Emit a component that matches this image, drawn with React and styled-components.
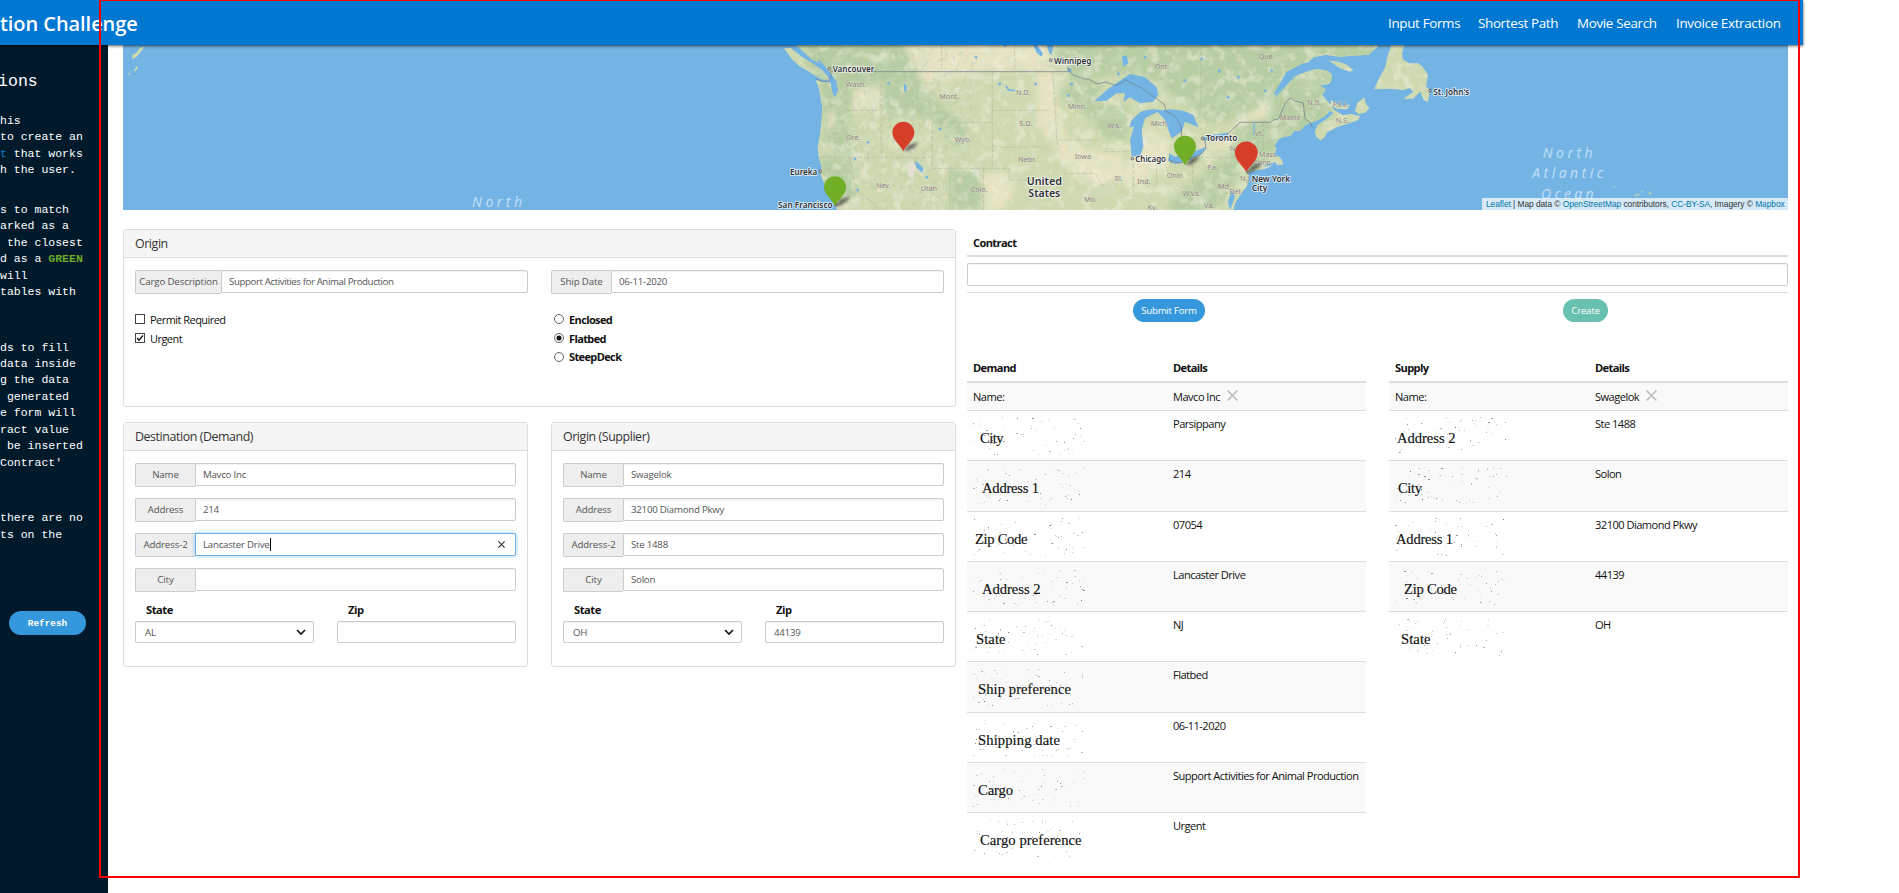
import React from "react";
import styled, { createGlobalStyle, css } from "styled-components";

const GlobalStyle = createGlobalStyle`
  * { box-sizing: border-box; }
  body { margin: 0; background: #fff; overflow: hidden; }
  body, input, button { font-family: "Open Sans", "Noto Sans", sans-serif; }
`;

const Page = styled.div`
  position: relative;
  width: 1899px;
  height: 893px;
  overflow: hidden;
  color: #111;
  font-size: 11.1px;
  letter-spacing: -0.53px;
`;
const Header = styled.header`
  position: relative;
  z-index: 2;
  display: flex;
  align-items: center;
  justify-content: space-between;
  width: 1803px;
  height: 45px;
  padding-right: 23px;
  background: #0077d1;
  box-shadow: 0 1px 3px rgba(0, 0, 0, 0.65);
  color: #fff;
`;
const Brand = styled.h1`
  margin: 0;
  font-size: 20px;
  line-height: 45px;
  font-weight: 600;
  letter-spacing: -0.06px;
  padding-top: 1px;
`;
const Nav = styled.nav`
  display: flex;
  gap: 18px;
  padding-top: 1px;
`;
const NavLink = styled.a`
  width: ${(p) => p.$w}px;
  font-size: 13.4px;
  letter-spacing: -0.33px;
  white-space: nowrap;
`;
const Body = styled.div`
  display: flex;
  height: 848px;
`;
const Sidebar = styled.aside`
  width: 108px;
  flex: none;
  padding-top: 26px;
  background: #001a2c;
  color: #fff;
  font-family: "Liberation Mono", monospace;
  letter-spacing: 0;
`;
const SideTitle = styled.h2`
  margin: 0 0 20px -2px;
  font-size: 16.6px;
  line-height: 22px;
  font-weight: 400;
`;
const SideText = styled.p`
  margin: 0 0 ${(p) => p.$gap}px;
  font-size: 11.5px;
  line-height: 16.45px;
  white-space: pre;
`;
const Blue = styled.span`
  color: #1279d2;
`;
const Green = styled.b`
  color: #6cab27;
`;
const Pill = styled.button`
  display: block;
  width: ${(p) => p.$w}px;
  height: ${(p) => p.$h || 23}px;
  padding: 0;
  border: 0;
  border-radius: 12px;
  background: ${(p) => p.$bg || "#3598dc"};
  color: #fff;
  font-size: 9.7px;
  font-weight: 500;
  letter-spacing: -0.25px;
  ${(p) =>
    p.$mono &&
    css`
      margin-left: 9px;
      font-family: "Liberation Mono", monospace;
      font-size: 9.4px;
      font-weight: 700;
      letter-spacing: 0;
    `}
`;
const Main = styled.main`
  width: 1680px;
  padding-left: 15px;
`;
const MapBox = styled.div`
  position: relative;
  height: 165px;
  overflow: hidden;
  background: #73b4e5;
  svg { display: block; }
`;
const Attribution = styled.div`
  position: absolute;
  right: 0;
  bottom: 0;
  width: 306px;
  height: 12px;
  padding-left: 4px;
  background: rgba(255, 255, 255, 0.7);
  color: #333;
  font: 8.4px/13px "Liberation Sans", sans-serif;
  letter-spacing: -0.05px;
  white-space: nowrap;
  a { color: #0078a8; }
`;
const Columns = styled.div`
  display: flex;
  gap: 11px;
  padding-top: 19px;
`;
const Forms = styled.div`
  width: 833px;
  flex: none;
`;
const Pair = styled.div`
  display: grid;
  grid-template-columns: 405px 405px;
  gap: 23px;
`;
const Panel = styled.section`
  height: ${(p) => p.$h}px;
  margin-bottom: 15px;
  border: 1px solid #ddd;
  border-radius: 3px;
  background: #fff;
`;
const PanelHead = styled.h3`
  height: 28px;
  margin: 0;
  padding: 0 0 0 11px;
  border-bottom: 1px solid #ddd;
  background: #f5f5f5;
  color: #333;
  font-size: 12.4px;
  font-weight: 400;
  letter-spacing: -0.42px;
  line-height: 28px;
`;
const OriginGrid = styled.div`
  display: grid;
  grid-template-columns: 393px 393px;
  column-gap: 23px;
  padding: 12px 0 0 11px;
`;
const PanelBody = styled.div`
  padding: 12px 11px 0;
`;
const Field = styled.div`
  display: flex;
  height: 24px;
  margin-bottom: ${(p) => p.$gap ?? 11}px;
  width: ${(p) => (p.$w ? p.$w + "px" : "auto")};
`;
const Addon = styled.label`
  width: ${(p) => p.$w}px;
  border: 1px solid #ccc;
  border-right: 0;
  border-radius: 2px 0 0 2px;
  background: #eee;
  color: #555;
  font-size: 9.7px;
  line-height: 22px;
  letter-spacing: -0.13px;
  text-align: center;
  white-space: nowrap;
`;
const Value = styled.div`
  position: relative;
  display: flex;
  align-items: center;
  flex: 1;
  height: ${(p) => p.$h || 23}px;
  padding: 0 10px 0 ${(p) => p.$pl ?? 7}px;
  border: 1px solid ${(p) => (p.$focus ? "#66afe9" : "#ccc")};
  border-radius: ${(p) => (p.$alone ? "2px" : "0 2px 2px 0")};
  box-shadow: ${(p) =>
    p.$focus ? "0 0 5px rgba(102,175,233,.6)" : "inset 0 1px 1px rgba(0,0,0,.06)"};
  background: #fff;
  color: #555;
  font-size: 9.7px;
  letter-spacing: ${(p) => p.$ls ?? -0.24}px;
  svg { margin-left: auto; }
`;
const Caret = styled.span`
  width: 1px;
  height: 13px;
  background: #111;
`;
const Checks = styled.div`
  display: flex;
  flex-direction: column;
  padding: ${(p) => p.$pad};
`;
const Check = styled.label`
  display: flex;
  align-items: center;
  gap: 5px;
  height: 18.8px;
  font-weight: ${(p) => (p.$bold ? 700 : 400)};
  font-size: 11px;
  letter-spacing: ${(p) => (p.$bold ? -0.62 : -0.54)}px;
`;
const Half = styled.div`
  display: grid;
  grid-template-columns: 179px 179px;
  column-gap: 23px;
  margin-top: -4px;
  svg { margin-right: -3px; }
`;
const HalfLabel = styled.div`
  height: 22px;
  padding-left: ${(p) => p.$pl}px;
  font-size: 11.2px;
  font-weight: 700;
  letter-spacing: -0.5px;
  line-height: 22px;
`;
const Right = styled.div`
  width: 821px;
`;
const ContractHead = styled.div`
  height: 28px;
  padding-left: 6px;
  border-bottom: 2px solid #ddd;
  font-weight: 700;
  letter-spacing: -0.62px;
  line-height: 28px;
`;
const ContractRow = styled.div`
  height: 36px;
  padding-top: 6px;
  border-bottom: 1px solid #ddd;
`;
const Buttons = styled.div`
  display: flex;
  height: 60px;
  padding: 6px 0 0 166px;
  gap: 358px;
`;
const Tables = styled.div`
  display: flex;
  gap: 23px;
`;
const Table = styled.div`
  width: 399px;
`;
const Row = styled.div`
  display: grid;
  grid-template-columns: ${(p) => p.$c}px 1fr;
  height: 50.25px;
  padding-left: 6px;
  border-top: 1px solid #ddd;
  background: ${(p) => (p.$odd ? "#f9f9f9" : "#fff")};
  line-height: 17px;
  white-space: nowrap;
`;
const Cell = styled.div`
  padding-top: 4px;
`;
const HeadRow = styled(Row)`
  height: 30px;
  border-top: 0;
  border-bottom: 2px solid #ddd;
  font-weight: 700;
  letter-spacing: -0.62px;
  line-height: 29px;
  ${Cell} { padding: 0; }
`;
const NameRow = styled(Row)`
  height: 27px;
  border: 0;
  line-height: 28px;
  ${Cell} { padding: 0; }
  svg { margin-left: 7px; vertical-align: 0; }
`;
const Frame = styled.div`
  position: absolute;
  z-index: 3;
  left: 99px;
  top: -1px;
  width: 1701px;
  height: 879px;
  border: 2px solid #f80000;
  pointer-events: none;
`;

const Cross = ({ size = 11, color = "#bbb", w = 1.4 }) => (
  <svg width={size} height={size} viewBox="0 0 10 10">
    <path d="M.5.5l9 9M9.5.5l-9 9" stroke={color} strokeWidth={w} fill="none" />
  </svg>
);
const Chevron = () => (
  <svg width="10" height="7" viewBox="0 0 10 7">
    <path d="M1 1l4 4 4-4" stroke="#111" strokeWidth="1.6" fill="none" />
  </svg>
);
const Box = ({ on }) => (
  <svg width="10" height="10" viewBox="0 0 10 10">
    <rect x=".5" y=".5" width="9" height="9" fill="#fff" stroke="#444" />
    {on && <path d="M2 5l2 2.2L8 2.5" stroke="#111" strokeWidth="1.3" fill="none" />}
  </svg>
);
const Dot = ({ on }) => (
  <svg width="10" height="10" viewBox="0 0 10 10">
    <circle cx="5" cy="5" r="4.5" fill="#fff" stroke="#555" strokeWidth=".9" />
    {on && <circle cx="5" cy="5" r="2.5" fill="#111" />}
  </svg>
);

function specks(seed) {
  let s = seed * 7919 + 13;
  const rnd = () => {
    s = (s * 16807) % 2147483647;
    return s / 2147483647;
  };
  rnd();
  return Array.from({ length: 58 }, () => ({
    x: Math.floor(rnd() * 112),
    y: Math.floor(rnd() * 38),
    o: 0.1 + rnd() * rnd() * 0.5,
    w: rnd() > 0.85 ? 2 : 1,
  }));
}
const Captcha = ({ text, x, w, seed }) => (
  <svg width="114" height="46" viewBox="0 0 114 46">
    {specks(seed).map((p, i) => (
      <rect key={i} x={p.x} y={p.y + 6} width={p.w} height="1" fill="#000" opacity={p.o} />
    ))}
    <text x={x} y="31.5" textLength={w} fontFamily="Liberation Serif, serif" fontSize="14.6" fill="#111" stroke="#111" strokeWidth=".15" letterSpacing="0">
      {text}
    </text>
  </svg>
);

const demand = [
  ["City", "Parsippany", 7, 23.5],
  ["Address 1", "214", 9, 57],
  ["Zip Code", "07054", 2, 52.5],
  ["Address 2", "Lancaster Drive", 9, 58.5],
  ["State", "NJ", 3, 29.5],
  ["Ship preference", "Flatbed", 5, 93],
  ["Shipping date", "06-11-2020", 5, 82],
  ["Cargo", "Support Activities for Animal Production", 5, 35],
  ["Cargo preference", "Urgent", 7, 101.5],
];
const supply = [
  ["Address 2", "Ste 1488", 2, 58.5],
  ["City", "Solon", 3, 24],
  ["Address 1", "32100 Diamond Pkwy", 1, 57],
  ["Zip Code", "44139", 9, 53],
  ["State", "OH", 6, 29.5],
];
const DetailTable = ({ title, name, rows, c, seed }) => (
  <Table>
    <HeadRow $c={c}>
      <Cell>{title}</Cell>
      <Cell>Details</Cell>
    </HeadRow>
    <NameRow $c={c} $odd>
      <Cell>Name:</Cell>
      <Cell>
        {name}
        <Cross />
      </Cell>
    </NameRow>
    {rows.map(([label, value, x, w], i) => (
      <Row key={label} $c={c} $odd={i % 2 === 1}>
        <Captcha text={label} x={x} w={w} seed={seed + i} />
        <Cell>{value}</Cell>
      </Row>
    ))}
  </Table>
);

const LAND =
  "M75 10L100 35 125 58 150 70 168 82 178 95 192 112 200 130 197 160 190 168 184 145 182 128 165 126 138 120 148 150 152 175 157 200 154 250 150 285 143 320 146 350 155 382 152 405 163 430 166 455 184 478 192 492 205 515L1388 515 1396 490 1412 462 1430 440 1438 415 1434 398 1450 392 1486 386 1505 378 1480 380 1490 372 1515 366 1522 374 1539 374 1536 360 1526 348 1518 352 1514 340 1520 325 1512 318 1526 298 1540 290 1562 288 1572 272 1590 272 1600 262 1612 252 1618 250 1640 242 1665 228 1680 212 1690 220 1668 238 1642 256 1634 276 1640 292 1652 301 1664 292 1672 276 1700 262 1730 252 1765 240 1770 228 1742 222 1718 226 1690 208 1684 196 1672 184 1656 164 1668 150 1650 136 1676 132 1684 122 1686 104 1672 92 1642 87 1608 92 1586 102 1562 124 1538 150 1518 172 1512 176 1520 164 1550 128 1578 104 1606 86 1612 70 1630 52 1668 44 1708 50 1740 48 1796 44 1822 20 1824 10Z";
const GREEN = [
  "M70 10H395L440 90 470 150 520 200 570 240 600 290 560 320 500 250 440 230 400 220 345 235 330 190 340 130 250 145 235 230 250 340 220 350 160 300 155 200 150 125Z",
  "M850 10H1830V50L1600 90 1500 180 1380 240 1320 250 1250 200 1150 120 1060 100 920 120 890 100 860 85Z",
  "M900 110L1000 130 970 190 1080 200 1070 300 1000 290 960 230 870 170Z",
  "M1480 120L1690 90 1680 240 1580 290 1510 330 1480 380 1420 380 1380 460 1330 515H1180L1230 460 1300 400 1380 350 1400 260 1500 230Z",
  "M540 390L620 395 640 440 635 510H545Z",
  "M150 350L240 360 260 510H200L160 440Z",
];
const CREAM = [
  "M405 10H830L840 85 640 92 590 110 520 130 460 130 440 90Z",
  "M800 100L870 95 850 170 890 290 960 330 1060 345 1060 400 980 440 900 400 850 310 800 250Z",
  "M640 400L700 395 740 440 700 510H640Z",
  "M250 150L330 145 345 195 260 215Z",
  "M170 235L190 200 195 240 175 290Z",
  "M350 290L380 310 430 315 480 280 470 310 410 330 340 310Z",
  "M1100 290L1140 260 1200 300 1190 390 1080 440 1020 410 1080 370Z",
  "M1380 250L1480 200 1510 180 1480 235 1430 245Z",
  "M1290 310L1400 300 1370 330 1290 330Z",
  "M200 490L235 480 250 510H200Z",
];
const LAKES = [
  "M973 184L1010 150 1045 125 1080 102 1125 112 1160 142 1165 165 1150 185 1110 190 1080 172 1060 185 1065 160 1040 160 1010 182Z",
  "M1085 240L1112 215 1140 208 1175 210 1150 222 1125 235 1115 270 1120 320 1110 350 1085 348 1080 300 1092 260 1078 262Z",
  "M1160 212L1200 208 1240 212 1270 225 1285 262 1245 245 1235 275 1205 295 1195 270 1185 240Z",
  "M1198 340L1215 350 1270 335 1310 320 1295 342 1250 362 1215 372 1195 362Z",
  "M1300 292L1330 284 1375 278 1370 290 1335 300 1302 302Z",
  "M1056 50L1070 46 1075 70 1060 80Z",
  "M806 22L818 40 815 50 800 38 790 15H800Z",
  "M830 15H850L845 45 838 40Z",
  "M894 85L905 88 902 98 895 96Z",
  "M434 362L448 372 460 385 458 398 440 385Z",
  "M402 130L410 140 408 158 402 150Z",
  "M1385 450L1395 470 1380 510 1374 485Z",
  "M1550 95L1510 165 1520 162 1572 108 1640 85 1660 65 1600 70Z",
  "M1450 250H1454V275L1450 290Z",
  "M1345 85L1352 90 1350 100 1344 96Z",
];
const ISLANDS = [
  "M42 25L62 24 95 50 130 72 158 92 172 108 178 122 152 117 118 95 88 78 66 58Z",
  "M1678 62L1700 64 1730 74 1750 90 1740 95 1710 85Z",
  "M1682 180L1700 192 1722 198 1740 192 1732 208 1700 206 1684 196Z",
  "M1755 212L1762 190 1782 172 1788 192 1798 205 1786 218 1765 222Z",
  "M1866 10L1852 50 1846 80 1830 110 1812 148 1860 146 1900 150 1920 144 1930 156 1900 176 1930 176 1950 155 1962 180 1974 186 1980 150 1968 140 1974 105 1956 78 1944 70 1916 70 1898 56 1896 38 1905 10Z",
];
const labels = [
  [228, 140, "Wash."], [508, 176, "Mont."], [738, 163, "N.D."], [748, 258, "S.D."],
  [228, 299, "Ore."], [554, 306, "Wyo."], [745, 365, "Nebr."], [318, 443, "Nev."],
  [452, 453, "Utah"], [602, 455, "Colo."], [893, 205, "Minn."], [1012, 264, "Wis."],
  [1142, 257, "Mich."], [1154, 86, "Ont."], [1466, 55, "Que."], [914, 356, "Iowa"],
  [1034, 422, "Ill."], [1102, 431, "Ind."], [1190, 413, "Ohio"], [942, 486, "Mo."],
  [1133, 509, "Ky."], [1238, 467, "W.Va."], [1302, 503, "Va."], [1312, 390, "Pa."],
  [1344, 445, "Md."], [1378, 460, "Del."], [1410, 423, "N.J."], [1380, 332, "N.Y."],
  [1466, 351, "Mass."], [1450, 373, "Conn."], [1454, 288, "Vt."], [1529, 240, "Maine"],
  [1612, 193, "N.B."], [1688, 201, "P.E.I."], [1697, 247, "N.S."],
];
const cities = [
  [188, 94, "Vancouver", 125], [60, 402, "Eureka", 82], [24, 501, "San Francisco", 164],
  [852, 70, "Winnipeg", 112], [1096, 365, "Chicago", 92], [1308, 302, "Toronto", 94],
  [1445, 425, "New York", 115], [1445, 450, "City", 47], [1990, 162, "St. John's", 108],
  [770, 434, "United", 106, 31], [775, 470, "States", 96, 31],
];
const dots = [[178, 86], [151, 394], [198, 494], [842, 61], [1087, 356], [1298, 295], [1980, 152], [1435, 397]];
const sea = [
  [-894, 500, "North", 150], [2318, 353, "North", 150],
  [2287, 415, "Atlantic", 212], [2313, 476, "Ocean", 158],
];
const pins = [[400, 332, "#d63e2a"], [195, 496, "#72af26"], [1245, 374, "#72af26"], [1429, 395, "#d63e2a", 1.04]];

const USMap = () => (
  <svg width="1665" height="165" viewBox="-1941 15 4995 495" fontFamily="Noto Sans, Open Sans, sans-serif" letterSpacing="0">
    <defs>
      <clipPath id="land"><path d={LAND} />{ISLANDS.map((d) => <path key={d} d={d} />)}</clipPath>
      <filter id="soft" x="-20%" y="-20%" width="140%" height="140%"><feGaussianBlur stdDeviation="9" /></filter>
      <filter id="mottle" x="0" y="0" width="100%" height="100%">
        <feTurbulence type="fractalNoise" baseFrequency=".025" numOctaves="4" seed="8" />
        <feColorMatrix values="0 0 0 0 .64  0 0 0 0 .75  0 0 0 0 .56  0 0 5 0 -2.5" />
      </filter>
      <filter id="light" x="0" y="0" width="100%" height="100%">
        <feTurbulence type="fractalNoise" baseFrequency=".03" numOctaves="4" seed="31" />
        <feColorMatrix values="0 0 0 0 .91  0 0 0 0 .89  0 0 0 0 .76  0 5 0 0 -2.6" />
      </filter>
      <filter id="relief" x="0" y="0" width="100%" height="100%">
        <feTurbulence type="fractalNoise" baseFrequency=".09 .06" numOctaves="3" seed="21" />
        <feColorMatrix values="0 0 0 0 .42  0 0 0 0 .53  0 0 0 0 .4  0 4 0 0 -2.1" />
      </filter>
      <filter id="sh" x="-50%" y="-50%" width="200%" height="200%"><feGaussianBlur stdDeviation="4" /></filter>
    </defs>
    <rect x="-1941" y="15" width="4995" height="495" fill="#73b4e5" />
    <g clipPath="url(#land)">
      <rect x="0" y="0" width="2100" height="520" fill="#cfd9b0" />
      <g filter="url(#soft)">
        {GREEN.map((d) => <path key={d} d={d} fill="#b7cda3" />)}
        {CREAM.map((d) => <path key={d} d={d} fill="#e7e3c2" />)}
      </g>
      <rect x="0" y="0" width="2100" height="520" filter="url(#mottle)" opacity=".4" />
      <rect x="0" y="0" width="2100" height="520" filter="url(#light)" opacity=".4" />
      <rect x="60" y="0" width="560" height="520" filter="url(#relief)" opacity=".3" />
      <path d="M415 370L428 362 436 385 428 415 414 410Z" fill="#e4e0d4" />
    </g>
    {LAKES.map((d) => <path key={d} d={d} fill="#73b4e5" />)}
    <g fill="#73b4e5">
      {[[613, 50], [350, 128], [288, 305], [505, 265], [684, 130], [792, 130], [250, 355], [258, 448], [465, 410], [900, 130], [890, 165], [1120, 50], [1290, 55], [1370, 170], [1400, 110], [1480, 150], [1500, 90], [1240, 120], [700, 15], [1040, 100]].map(([x, y]) => (
        <path key={x} d={`M${x} ${y}l7 -3 3 6 -6 4z`} />
      ))}
    </g>
    <path d="M708 138l8 12 18 2M1610 265l30-8M195 120l6 30-7 18M145 60l20 22" stroke="#73b4e5" strokeWidth="5" fill="none" />
    <path d="M138 117l18 8 22-2 6-16-4-12H894V82l14 22 30 12 18 2 28 14 22-6 30 10 25-10 2-8 50 25 45 32 25 18 5 20 30 18 15 28 4 80M1198 350q-2 14 8 20M1200 362l30 8 60-25 18-20-4-30M1370 285l40-38h90l12-8 14-2 8-20 14-32 14-12 12 10 26 6 5 48 14 8 8 18" stroke="#6f7f8f" strokeWidth="2.2" fill="none" />
    <path d="M515 15V95M734 15V95M334 135V352M150 352H487M487 250V385H718M667 95V385M487 248H667M667 211H840M667 318L700 322 820 320 840 335M640 385V510M540 385V510M848 95L856 200 860 300 865 330M860 300H985M1000 335H1080M1292 15V200M1090 370V470M1268 352H1430M1268 352V430M880 400H975L1000 440M230 211H330M240 352L255 440 330 510M718 385V420H860M1160 365V440M1480 245V330" stroke="#a9b59b" strokeWidth="2" strokeDasharray="14 5" fill="none" opacity=".8" />
    <path d="M-1876 20l-14 4-10 14-12 6-2 14 12-6 12-14zM-1900 78l-8 14 5 2 7-12zM-1918 92l-8 12 4 1z" fill="#d3dbab" />
    <path d="M2528 438l8 0 0 4-8 0zM2590 465l16-5 8 2-14 8zM2612 452l10 1-2 6zM2634 458l8-4 4 8-8 3zM2628 478l10 0 0 5-8 0z" fill="#a9cbc5" />
    <g transform="translate(0 1)" fontSize="21.5" fill="#8d8086" stroke="#e9ecd6" strokeWidth="3" paintOrder="stroke" strokeOpacity=".5">
      {labels.map(([x, y, t]) => <text key={t} x={x} y={y}>{t}</text>)}
    </g>
    <g fontStyle="italic" fontSize="42" fill="#c0def5">
      {sea.map(([x, y, t, w]) => <text key={x} x={x} y={y} textLength={w}>{t}</text>)}
    </g>
    <g fill="#ddd" stroke="#444" strokeWidth="2.4">
      {dots.map(([x, y]) => <circle key={x} cx={x} cy={y} r="4" />)}
    </g>
    {pins.map(([x, y, c, k = 1]) => (
      <g key={x} transform={`translate(${x} ${y + 2}) scale(${k})`}>
        <path d="M0 0L16-20 44-28 36-14 16-1Z" fill="#222" opacity=".6" filter="url(#sh)" />
        <path d="M0 0C-6-16-33-34-33-56A33 33 0 1 1 33-56C33-34 6-16 0 0Z" fill={c} />
      </g>
    ))}
    <g transform="translate(0 2)" fontWeight="600" fill="#2e3036" stroke="#fff" strokeWidth="5" strokeOpacity=".8" paintOrder="stroke" strokeLinejoin="round">
      {cities.map(([x, y, t, w, s = 24]) => <text key={t} x={x} y={y} fontSize={s} textLength={w} lengthAdjust="spacingAndGlyphs">{t}</text>)}
    </g>
  </svg>
);

const AddressPanel = ({ title, addonW, values, focus, state, zip }) => (
  <Panel $h={245}>
    <PanelHead>{title}</PanelHead>
    <PanelBody>
      {["Name", "Address", "Address-2", "City"].map((l, i) => (
        <Field key={l}>
          <Addon $w={addonW}>{l}</Addon>
          <Value $focus={focus === i}>
            {values[i]}
            {focus === i && (
              <>
                <Caret />
                <Cross size={7} color="#333" w={1.6} />
              </>
            )}
          </Value>
        </Field>
      ))}
      <Half>
        <HalfLabel $pl={11}>State</HalfLabel>
        <HalfLabel $pl={11}>Zip</HalfLabel>
        <Value $alone $h={22} $pl={9}>
          {state}
          <Chevron />
        </Value>
        <Value $alone $h={22} $pl={8}>{zip}</Value>
      </Half>
    </PanelBody>
  </Panel>
);

export default function App() {
  return (
    <Page>
      <GlobalStyle />
      <Header>
        <Brand>tion Challenge</Brand>
        <Nav>
          <NavLink $w={72}>Input Forms</NavLink>
          <NavLink $w={81}>Shortest Path</NavLink>
          <NavLink $w={81}>Movie Search</NavLink>
          <NavLink $w={104}>Invoice Extraction</NavLink>
        </Nav>
      </Header>
      <Body>
        <Sidebar>
          <SideTitle>ions</SideTitle>
          <SideText $gap={23}>
            {"his\nto create an\n"}
            <Blue>t</Blue>
            {" that works\nh the user."}
          </SideText>
          <SideText $gap={39}>
            {"s to match\narked as a\n the closest\nd as a "}
            <Green>GREEN</Green>
            {"\nwill\ntables with"}
          </SideText>
          <SideText $gap={39}>
            {"ds to fill\ndata inside\ng the data\n generated\ne form will\nract value\n be inserted\nContract'"}
          </SideText>
          <SideText $gap={68}>{"there are no\nts on the"}</SideText>
          <Pill $mono $w={77} $h={24}>Refresh</Pill>
        </Sidebar>
        <Main>
          <MapBox>
            <USMap />
            <Attribution>
              <a>Leaflet</a> | Map data © <a>OpenStreetMap</a> contributors, <a>CC-BY-SA</a>, Imagery © <a>Mapbox</a>
            </Attribution>
          </MapBox>
          <Columns>
            <Forms>
              <Panel $h={178}>
                <PanelHead>Origin</PanelHead>
                <OriginGrid>
                  <Field $gap={0} $w={393}>
                    <Addon $w={86}>Cargo Description</Addon>
                    <Value $ls={-0.4}>Support Activities for Animal Production</Value>
                  </Field>
                  <Field $gap={0} $w={393}>
                    <Addon $w={60}>Ship Date</Addon>
                    <Value>06-11-2020</Value>
                  </Field>
                  <Checks $pad="16px 0 0 0">
                    <Check><Box />Permit Required</Check>
                    <Check><Box on />Urgent</Check>
                  </Checks>
                  <Checks $pad="16px 0 0 3px">
                    <Check $bold><Dot />Enclosed</Check>
                    <Check $bold><Dot on />Flatbed</Check>
                    <Check $bold><Dot />SteepDeck</Check>
                  </Checks>
                </OriginGrid>
              </Panel>
              <Pair>
                <AddressPanel title="Destination (Demand)" addonW={60} values={["Mavco Inc", "214", "Lancaster Drive", ""]} focus={2} state="AL" zip="" />
                <AddressPanel title="Origin (Supplier)" addonW={60} values={["Swagelok", "32100 Diamond Pkwy", "Ste 1488", "Solon"]} state="OH" zip="44139" />
              </Pair>
            </Forms>
            <Right>
              <ContractHead>Contract</ContractHead>
              <ContractRow><Value $alone /></ContractRow>
              <Buttons>
                <Pill $w={72}>Submit Form</Pill>
                <Pill $w={45} $bg="#68c0b0">Create</Pill>
              </Buttons>
              <Tables>
                <DetailTable title="Demand" name="Mavco Inc" rows={demand} c={200} seed={3} />
                <DetailTable title="Supply" name="Swagelok" rows={supply} c={200} seed={40} />
              </Tables>
            </Right>
          </Columns>
        </Main>
      </Body>
      <Frame />
    </Page>
  );
}
